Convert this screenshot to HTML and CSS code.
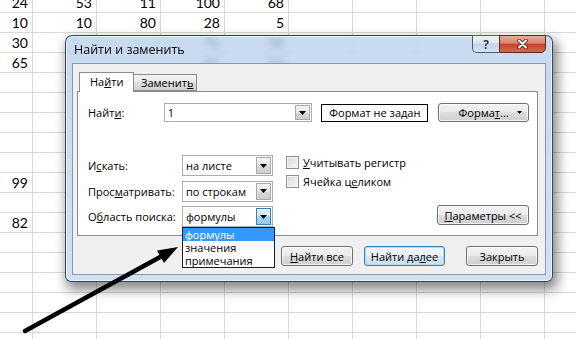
FILE: index.html
```html
<!DOCTYPE html>
<html lang="ru">
<head>
    <meta charset="UTF-8">
    <meta name="viewport" content="width=device-width, initial-scale=1.0">
    <link rel="stylesheet" href="styles.css">
    <title>Найти и заменить</title>
</head>
<body>
    <!-- worksheet behind the dialog -->
    <div class="sheet">
        <div class="row"><span>24</span><span>53</span><span>11</span><span>100</span><span>68</span></div>
        <div class="row"><span>10</span><span>10</span><span>80</span><span>28</span><span>5</span></div>
        <div class="row"><span>30</span><span></span><span></span><span>76</span><span>38</span></div>
        <div class="row"><span>65</span><span></span><span></span><span>81</span><span>90</span></div>
        <div class="row"></div>
        <div class="row"></div>
        <div class="row"></div>
        <div class="row"></div>
        <div class="row"></div>
        <div class="row"><span>99</span></div>
        <div class="row"></div>
        <div class="row"><span>82</span></div>
    </div>

    <!-- find & replace window -->
    <div class="dialog">
        <div class="titlebar">
            <span class="title">Найти и заменить</span>
            <div class="caption">
                <span class="cap-help">?</span>
                <span class="cap-close">
                    <svg width="13" height="10" viewBox="0 0 13 10">
                        <path d="M3 1.5 L10 8.5 M10 1.5 L3 8.5" stroke="#5b1d12" stroke-width="3.6" stroke-linecap="round"/>
                        <path d="M3 1.5 L10 8.5 M10 1.5 L3 8.5" stroke="#fff" stroke-width="2" stroke-linecap="round"/>
                    </svg>
                </span>
            </div>
        </div>

        <div class="client">
            <div class="tabs">
                <div class="tab active">На<u>й</u>ти</div>
                <div class="tab">Заменит<u>ь</u></div>
            </div>

            <div class="panel">
                <div class="find-row">
                    <label class="lbl">Найт<u>и</u>:</label>
                    <div class="combo wide">
                        <span class="val">1</span>
                        <span class="drop"><svg width="7" height="4"><polygon points="0,0 7,0 3.5,4" fill="#000"/></svg></span>
                    </div>
                    <div class="format-box">Формат не задан</div>
                    <button class="btn format-btn"><span>Форма<u>т</u>...</span><svg class="mini" width="5" height="3"><polygon points="0,0 5,0 2.5,3" fill="#000"/></svg></button>
                </div>

                <div class="options">
                    <div class="opt-grid">
                        <label class="lbl">И<u>с</u>кать:</label>
                        <div class="combo">
                            <span class="val">на листе</span>
                            <span class="drop"><svg width="7" height="4"><polygon points="0,0 7,0 3.5,4" fill="#000"/></svg></span>
                        </div>
                        <label class="lbl">Прос<u>м</u>атривать:</label>
                        <div class="combo">
                            <span class="val">по строкам</span>
                            <span class="drop"><svg width="7" height="4"><polygon points="0,0 7,0 3.5,4" fill="#000"/></svg></span>
                        </div>
                        <label class="lbl">О<u>б</u>ласть поиска:</label>
                        <div class="combo">
                            <span class="val">формулы</span>
                            <span class="drop hot"><svg width="7" height="4"><polygon points="0,0 7,0 3.5,4" fill="#000"/></svg></span>
                            <ul class="list">
                                <li class="sel">формулы</li>
                                <li>значения</li>
                                <li>примечания</li>
                            </ul>
                        </div>
                    </div>

                    <div class="checks">
                        <div class="check"><span class="cb"></span><span><u>У</u>читывать регистр</span></div>
                        <div class="check"><span class="cb"></span><span>Ячейка ц<u>е</u>ликом</span></div>
                    </div>

                    <button class="btn params-btn"><span><u>П</u>араметры &lt;&lt;</span></button>
                </div>
            </div>

            <div class="actions">
                <button class="btn act"><span><u>Н</u>айти все</span></button>
                <button class="btn act next focus"><span>Найти да<u>л</u>ее</span></button>
                <button class="btn act close">Закрыть</button>
            </div>
        </div>
    </div>

    <!-- hand drawn pointer -->
    <svg class="arrow" width="576" height="339" viewBox="0 0 576 339">
        <line x1="25" y1="331" x2="162" y2="256" stroke="#000" stroke-width="4.5" stroke-linecap="round"/>
        <polygon points="178,247 157,250.5 164,263" fill="#000"/>
    </svg>
</body>
</html>
```

FILE: styles.css
```css
* {
  margin: 0;
  padding: 0;
  box-sizing: border-box;
}

body {
  width: 576px;
  height: 339px;
  overflow: hidden;
  position: relative;
  background-color: #fff;
  font-family: 'Open Sans', 'Liberation Sans', sans-serif;
  font-size: 11px;
  color: #000;
}

/* worksheet */
.sheet {
  height: 339px;
  overflow: hidden;
  background-image: linear-gradient(to right, #d8d8d8 1px, transparent 1px),
                    linear-gradient(to bottom, #d8d8d8 1px, transparent 1px);
  background-size: 64px 100%, 100% 20px;
  background-position: 32px 0, 0 12px;
  font-family: 'Lato', 'Liberation Sans', sans-serif;
  font-size: 14px;
}

.row {
  display: grid;
  grid-template-columns: 32px repeat(4, 64px);
  height: 20px;
  line-height: 21px;
}

.row:first-child {
  margin-top: -8px;
}

.row span {
  text-align: right;
  padding-right: 4px;
}

/* window */
.dialog {
  position: absolute;
  left: 65px;
  top: 35px;
  width: 488px;
  height: 247px;
  display: flex;
  flex-direction: column;
  padding: 0 6px 6px;
  border: 1px solid rgba(28, 44, 68, 0.85);
  border-radius: 7px 7px 6px 6px;
  background: linear-gradient(rgba(186, 209, 235, 0.8), rgba(204, 222, 242, 0.9));
  backdrop-filter: blur(3px);
  box-shadow: 3px 6px 12px 2px rgba(0, 0, 0, 0.45), inset 0 0 0 1px rgba(255, 255, 255, 0.55);
}

.titlebar {
  height: 27px;
  display: flex;
  align-items: center;
  justify-content: space-between;
}

.title {
  padding-left: 2px;
  font-size: 12.5px;
}

.caption {
  align-self: flex-start;
  margin-top: -1px;
  display: flex;
}

.cap-help,
.cap-close {
  height: 18px;
  display: flex;
  align-items: center;
  justify-content: center;
  border: 1px solid #4d5f78;
}

.cap-help {
  width: 27px;
  border-right: none;
  border-radius: 0 0 0 5px;
  background: linear-gradient(#eef3f9, #d8e3ef 45%, #c3d3e6 50%, #d5e2f0);
  font-weight: bold;
  font-size: 12px;
  color: #2a3d58;
}

.cap-close {
  width: 47px;
  border-color: #6e2418;
  border-radius: 0 0 5px 0;
  background: linear-gradient(#e9ab9c, #d9806c 45%, #c5412a 52%, #d66a4e);
}

.client {
  flex: 1;
  display: flex;
  flex-direction: column;
  padding: 8px 7px 8px 4px;
  background-color: #f0f0f0;
  border: 1px solid #8799b0;
}

/* tabs */
.tabs {
  display: flex;
  align-items: flex-end;
  height: 19px;
  padding-left: 2px;
  position: relative;
  z-index: 1;
}

.tab {
  height: 17px;
  width: 63px;
  padding-left: 7px;
  line-height: 15px;
  border: 1px solid #898c95;
  border-left: none;
  background: linear-gradient(#f3f3f3, #ebebeb 50%, #dedede 50%, #d2d2d2);
}

.tab.active {
  height: 20px;
  width: 55px;
  margin-bottom: -1px;
  padding-left: 10px;
  line-height: 18px;
  border-left: 1px solid #898c95;
  border-bottom: none;
  background: #fff;
}

.panel {
  height: 145px;
  padding: 11px 8px 8px 10px;
  background-color: #fff;
  border: 1px solid #898c95;
}

.find-row {
  display: flex;
  align-items: center;
  height: 19px;
}

.find-row .lbl {
  width: 76px;
}

/* combo boxes */
.combo {
  position: relative;
  display: flex;
  height: 21px;
  background-color: #fff;
  border: 1px solid #abadb3;
}

.combo.wide {
  width: 149px;
  height: 19px;
}

.val {
  flex: 1;
  padding-left: 3px;
  display: flex;
  align-items: center;
}

.drop {
  width: 15px;
  margin: 1px;
  display: flex;
  align-items: center;
  justify-content: center;
  border: 1px solid #a9a9a9;
  background: linear-gradient(#f4f4f4, #e6e6e6 50%, #d8d8d8 50%, #cdcdcd);
}

.drop.hot {
  border-color: #3c7fb1;
  background: linear-gradient(#e3f2fc, #cbe6f8 50%, #a9d6f4 50%, #92c8ee);
}

.list {
  list-style: none;
  position: absolute;
  top: calc(100% + 1px);
  left: -1px;
  width: 93px;
  background-color: #fff;
  border: 1px solid #1c1c1c;
  z-index: 5;
}

.list li {
  height: 13px;
  line-height: 13px;
  padding-left: 2px;
}

.list li.sel {
  background-color: #3399ff;
  color: #fff;
}

.format-box {
  margin-left: 9px;
  width: 107px;
  height: 18px;
  line-height: 16px;
  text-align: center;
  border: 1px solid #000;
}

/* buttons */
.btn {
  height: 20px;
  display: flex;
  align-items: center;
  justify-content: center;
  font-family: inherit;
  font-size: 11px;
  color: #000;
  border: 1px solid #707070;
  border-radius: 3px;
  background: linear-gradient(#f2f2f2, #ebebeb 50%, #dddddd 50%, #cfcfcf);
  box-shadow: inset 0 0 0 1px rgba(255, 255, 255, 0.7);
}

.format-btn {
  margin-left: 10px;
  width: 91px;
  height: 19px;
  position: relative;
}

.format-btn .mini {
  position: absolute;
  right: 6px;
  top: 7px;
}

.options {
  display: flex;
  margin-top: 33px;
  height: 72px;
}

.opt-grid {
  display: grid;
  grid-template-columns: 94px 91px;
  grid-auto-rows: 21px;
  row-gap: 4.5px;
  align-items: center;
}

.checks {
  margin-left: 13px;
  margin-top: -2px;
}

.check {
  display: flex;
  align-items: center;
  gap: 4px;
  height: 19px;
}

.cb {
  width: 13px;
  height: 13px;
  border: 1px solid #8e8f8f;
  background: linear-gradient(135deg, #d6d8db, #f8f8f8);
  box-shadow: inset 0 0 0 1px #f4f4f4;
}

.params-btn {
  margin-left: auto;
  align-self: flex-end;
  margin-bottom: 2px;
  width: 92px;
}

.actions {
  display: flex;
  justify-content: flex-end;
  margin-top: 10px;
}

.act {
  width: 72px;
}

.act.next {
  width: 81px;
  margin-left: 11px;
}

.act.close {
  margin-left: 21px;
}

.btn.focus {
  border-color: #3c7fb1;
  background: linear-gradient(#f1f6fa, #e7eff6 50%, #d9e5ef 50%, #cfdde9);
  box-shadow: inset 0 0 0 1px #a9daf5;
}

.arrow {
  position: absolute;
  left: 0;
  top: 0;
  z-index: 10;
  pointer-events: none;
}
```
